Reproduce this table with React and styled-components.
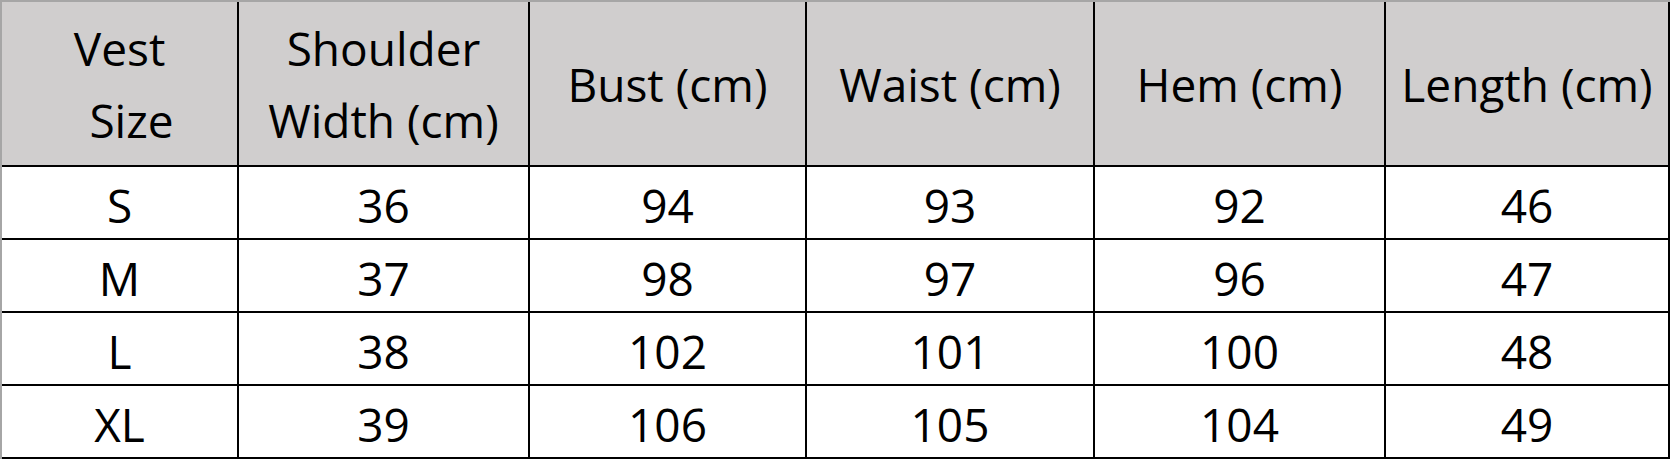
import React from "react";
import styled, { createGlobalStyle } from "styled-components";

const Global = createGlobalStyle`
  html, body { margin: 0; padding: 0; background: #ffffff; }
  body { font-family: "Open Sans", "Noto Sans", sans-serif; color: #000; }
`;

const Table = styled.div`
  display: grid;
  grid-template-columns: 237px 291px 277px 288px 291px 284px;
  grid-template-rows: 165px repeat(4, 73px);
  width: max-content;
  border-left: 2px solid #a6a6a6;
  border-top: 2px solid #a6a6a6;
`;

const Cell = styled.div`
  box-sizing: border-box;
  display: flex;
  align-items: center;
  justify-content: center;
  flex-direction: column;
  border-right: 2px solid #000;
  border-bottom: 2px solid #000;
  background: ${(p) => (p.$head ? "#d0cece" : "#ffffff")};
  font-size: 46px;
  line-height: 72px;
  text-align: center;
  white-space: nowrap;
  padding-top: ${(p) => (p.$head ? "0" : "5px")};
`;

const Line = styled.span`
  display: block;
  padding-left: ${(p) => p.$indent || 0}px;
`;

const headers = [
  [["Vest", 0], ["Size", 24]],
  [["Shoulder", 0], ["Width (cm)", 0]],
  [["Bust (cm)", 0]],
  [["Waist (cm)", 0]],
  [["Hem (cm)", 0]],
  [["Length (cm)", 0]],
];

const rows = [
  ["S", "36", "94", "93", "92", "46"],
  ["M", "37", "98", "97", "96", "47"],
  ["L", "38", "102", "101", "100", "48"],
  ["XL", "39", "106", "105", "104", "49"],
];

export default function App() {
  return (
    <>
      <Global />
      <Table>
        {headers.map((lines, i) => (
          <Cell $head key={"h" + i}>
            {lines.map(([t, ind]) => (
              <Line key={t} $indent={ind}>
                {t}
              </Line>
            ))}
          </Cell>
        ))}
        {rows.map((r, ri) =>
          r.map((v, ci) => <Cell key={ri + "-" + ci}>{v}</Cell>)
        )}
      </Table>
    </>
  );
}
